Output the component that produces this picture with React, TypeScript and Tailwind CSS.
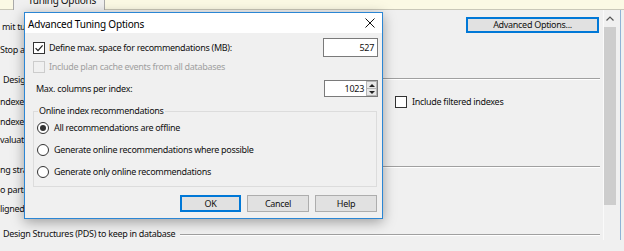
import React from 'react';

// Windows 10 style "Advanced Tuning Options" dialog over the tuning tab

function CheckBox({ checked = false, disabled = false }: { checked?: boolean; disabled?: boolean }) {
  return (
    <span
      className={
        disabled
          ? 'flex h-[12px] w-[12px] shrink-0 items-center justify-center border border-[#cccccc] bg-[#f0f0f0]'
          : 'flex h-[12px] w-[12px] shrink-0 items-center justify-center border border-[#333333] bg-white'
      }
    >
      {checked && (
        <svg viewBox="0 0 10 10" className="h-[10px] w-[10px]">
          <path d="M1.6 5.2 L4 7.6 L8.6 2.4" stroke="#1a1a1a" strokeWidth="1.2" fill="none" />
        </svg>
      )}
    </span>
  );
}

function Radio({ checked = false, label }: { checked?: boolean; label: string }) {
  return (
    <div className="flex h-[14px] items-center gap-[5px]">
      <span className="flex h-[12px] w-[12px] shrink-0 items-center justify-center rounded-full border border-[#333333] bg-white">
        {checked && <span className="h-[6px] w-[6px] rounded-full bg-[#333333]" />}
      </span>
      <span>{label}</span>
    </div>
  );
}

function Button({ label, primary = false, className = '' }: { label: string; primary?: boolean; className?: string }) {
  return (
    <div
      className={
        (primary
          ? 'border border-[#0078d7] shadow-[inset_0_0_0_1px_#0078d7] '
          : 'border border-[#adadad] ') +
        'flex items-center justify-center bg-[#e1e1e1] text-[#111] ' +
        className
      }
    >
      {label}
    </div>
  );
}

function Etched({ className = '' }: { className?: string }) {
  return <div className={'h-0 border-t border-[#a0a0a0] shadow-[0_1px_0_#ffffff] ' + className} />;
}

// label of the tab page, cut where the dialog covers it
function Cut({ text, className = '' }: { text: string; className?: string }) {
  return <div className={'w-[24px] overflow-hidden whitespace-nowrap ' + className}>{text}</div>;
}

export default function App() {
  return (
    <div className="relative h-[251px] w-[624px] overflow-hidden bg-[#f0f0f0] font-['Noto_Sans',sans-serif] text-[9px] leading-[12px] tracking-[-0.3px] text-[#111]">
      {/* tab strip */}
      <div className="flex h-[10px] bg-[#fbf9e4]">
        <div className="w-[13px] border-b border-[#c9c7b8]" />
        <div className="w-[92px] overflow-hidden border-x border-[#a9a9a9] bg-[#f0f0f0] pl-[14px]">
          <div className="-mt-[6px] text-[10px]">Tuning Options</div>
        </div>
        <div className="flex-1 border-b border-[#c9c7b8]" />
      </div>

      {/* tab page */}
      <div className="flex">
        <div className="w-[603px]">
          <div className="mt-[7px] flex h-[16px] items-start justify-between">
            <Cut text="mit tuning time" className="mt-[4px] pl-[2px]" />
            <Button label="Advanced Options..." primary className="mr-[4px] h-[16px] w-[133px]" />
          </div>
          <Cut text="Stop at:" className="mt-[11px]" />
          <div className="mt-[18px] flex items-center">
            <Cut text="Design Structures (PDS) to use in database" className="pl-[3px]" />
            <Etched className="mr-[3px] ml-[359px] -mt-[3px] flex-1" />
          </div>
          <div className="mt-[10px] flex items-center">
            <Cut text="ndexes" className="w-[395px]" />
            <CheckBox />
            <div className="ml-[5px]">Include filtered indexes</div>
          </div>
          <Cut text="ndexes" className="mt-[8px]" />
          <Cut text="valuate utilized PDS only" className="mt-[6px]" />
          <div className="mt-[18px] flex items-start">
            <Cut text="ng strategy to employ" />
            <Etched className="mt-[2px] mr-[3px] ml-[359px] flex-1" />
          </div>
          <Cut text="o partitioning" className="mt-[8px]" />
          <Cut text="ligned partitioning" className="mt-[7px]" />
          <div className="mt-[13px] flex items-center">
            <div className="pl-[3px]">Design Structures (PDS) to keep in database</div>
            <Etched className="mr-[3px] ml-[5px] flex-1" />
          </div>
        </div>

        {/* scrollbar */}
        <div className="w-[15px] border-l border-[#fafafa]">
          <div className="flex h-[17px] w-[12px] items-center justify-center">
            <svg viewBox="0 0 8 5" className="h-[5px] w-[8px]">
              <path d="M0.5 4.5 L4 1 L7.5 4.5" stroke="#555" strokeWidth="1.2" fill="none" />
            </svg>
          </div>
          <div className="h-[178px] w-[12px] bg-[#cdcdcd]" />
        </div>
        <div className="w-[2px]" />
        <div className="w-[1px] self-stretch bg-[#8fb2d6]" />
      </div>

      {/* dialog window */}
      <div className="absolute top-[12px] left-[24px] w-[359px] border border-[#2b86d4] bg-[#f0f0f0] shadow-[0_3px_12px_rgba(0,0,0,0.35)]">
        <div className="flex h-[20px] items-center justify-between bg-white pr-[7px] pl-[3px]">
          <span className="mt-[1px] text-[10px] tracking-[-0.2px] text-black">Advanced Tuning Options</span>
          <svg viewBox="0 0 10 10" className="h-[10px] w-[10px]">
            <path d="M0.5 0.5 L9.5 9.5 M9.5 0.5 L0.5 9.5" stroke="#111" strokeWidth="1" fill="none" />
          </svg>
        </div>

        <div className="pt-[5px] pr-[4px] pb-[6px] pl-[8px]">
          <div className="flex h-[19px] items-center justify-between">
            <div className="flex items-center gap-[4px] pt-[1px]">
              <CheckBox checked />
              <span>Define max. space for recommendations (MB):</span>
            </div>
            <div className="flex h-[19px] w-[55px] items-center justify-end border border-[#7a7a7a] bg-white pr-[3px]">527</div>
          </div>

          <div className="mt-[3px] flex h-[14px] items-center gap-[4px] text-[#a0a0a0]">
            <CheckBox disabled />
            <span>Include plan cache events from all databases</span>
          </div>

          <div className="mt-[6px] flex h-[17px] items-center justify-between">
            <span className="pl-[3px]">Max. columns per index:</span>
            <div className="flex h-[17px] w-[54px] border border-[#7a7a7a] bg-white">
              <div className="flex flex-1 items-center justify-end pr-[2px]">1023</div>
              <div className="flex w-[11px] flex-col">
                <div className="flex flex-1 items-center justify-center border border-[#b5b5b5] bg-[#e8e8e8]">
                  <span className="h-0 w-0 border-x-[3px] border-b-[3px] border-x-transparent border-b-[#222]" />
                </div>
                <div className="flex flex-1 items-center justify-center border border-t-0 border-[#b5b5b5] bg-[#e8e8e8]">
                  <span className="h-0 w-0 border-x-[3px] border-t-[3px] border-x-transparent border-t-[#222]" />
                </div>
              </div>
            </div>
          </div>

          <fieldset className="mt-[8px] mr-[1px] border border-[#dcdcdc] pt-[4px] pb-[7px] pl-[3px]">
            <legend className="ml-[1px] px-[1px]">Online index recommendations</legend>
            <div className="flex flex-col gap-[8px]">
              <Radio checked label="All recommendations are offline" />
              <Radio label="Generate online recommendations where possible" />
              <Radio label="Generate only online recommendations" />
            </div>
          </fieldset>

          <div className="mt-[8px] mr-[1px] flex justify-end gap-[6px]">
            <Button label="OK" primary className="h-[17px] w-[61px]" />
            <Button label="Cancel" className="h-[17px] w-[62px]" />
            <Button label="Help" className="h-[17px] w-[62px]" />
          </div>
        </div>
      </div>
    </div>
  );
}
